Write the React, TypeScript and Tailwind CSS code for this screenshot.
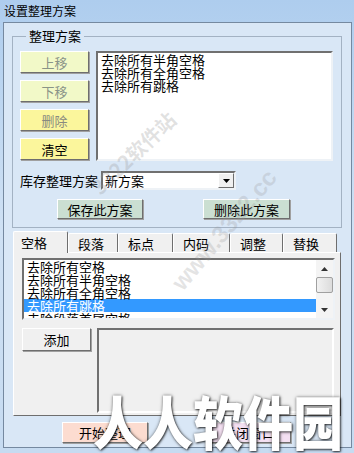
import React from "react";

const raised =
  "border border-t-white border-l-white border-r-[#6e6e6e] border-b-[#6e6e6e] shadow-[1px_1px_0_#a0a0a0]";
const sunken =
  "border-2 border-t-[#707070] border-l-[#707070] border-r-[#eef2f6] border-b-[#eef2f6]";

interface BtnProps {
  children: React.ReactNode;
  className?: string;
}

function Btn({ children, className = "" }: BtnProps): React.JSX.Element {
  return (
    <div className={`flex items-center justify-center text-[13px] leading-none ${raised} ${className}`}>
      {children}
    </div>
  );
}

const tabs = [
  { label: "空格", w: "w-[55px]", active: true },
  { label: "段落", w: "w-[50px]" },
  { label: "标点", w: "w-[55px]" },
  { label: "内码", w: "w-[57px]" },
  { label: "调整", w: "w-[53px]" },
  { label: "替换", w: "w-[54px]" },
];

const spaceItems = [
  "去除所有空格",
  "去除所有半角空格",
  "去除所有全角空格",
  "去除所有跳格",
  "去除段落首尾空格",
];

export default function App(): React.JSX.Element {
  return (
    <div className="relative flex h-[453px] w-[354px] flex-col overflow-hidden bg-gradient-to-b from-[#aecdee] via-[#cfe1f4] to-[#c6dbf1] font-['Noto_Sans_CJK_SC',sans-serif] text-black">
      {/* Title bar */}
      <div className="flex h-[22px] shrink-0 items-center pl-[4px] text-[12px] leading-none">
        设置整理方案
      </div>

      {/* Client area */}
      <div className="ml-[3px] mr-[2px] flex flex-col border border-[#7589a0] bg-[#d9e7f6] pl-[8px] pr-[9px] pb-[4px]">
        {/* Group box */}
        <fieldset className="mt-[6px] border border-[#a3b2c3] px-[7px] pt-[8px] pb-[8px]">
          <legend className="ml-[6px] px-[3px] text-[13px] leading-[14px]">整理方案</legend>

          <div className="flex gap-[7px]">
            <div className="flex w-[69px] flex-col gap-[7px]">
              <Btn className="h-[22px] bg-[#f2f9c8] text-[#8a9488]">上移</Btn>
              <Btn className="h-[22px] bg-[#f2f9c8] text-[#8a9488]">下移</Btn>
              <Btn className="h-[22px] bg-[#fbf69c] text-[#8a8a80]">删除</Btn>
              <Btn className="h-[22px] bg-[#fbf69c]">清空</Btn>
            </div>
            <div className={`h-[110px] w-[237px] bg-white pl-[3px] text-[13px] leading-[13px] ${sunken}`}>
              <div>去除所有半角空格</div>
              <div>去除所有全角空格</div>
              <div>去除所有跳格</div>
            </div>
          </div>

          <div className="mt-[10px] flex items-center">
            <div className="w-[81px] text-[13px] leading-none">库存整理方案</div>
            <div className={`flex h-[19px] w-[135px] items-center bg-white ${sunken}`}>
              <div className="flex-1 pl-[2px] text-[13px] leading-none">新方案</div>
              <div className={`flex h-full w-[16px] items-center justify-center bg-[#f0f0f0] ${raised} shadow-none`}>
                <svg width="7" height="4" viewBox="0 0 7 4">
                  <path d="M0 0h7L3.5 4z" fill="#000" />
                </svg>
              </div>
            </div>
          </div>

          <div className="mt-[9px] flex gap-[60px] pl-[37px]">
            <Btn className="h-[20px] w-[86px] bg-[#cbdfd2]">保存此方案</Btn>
            <Btn className="h-[20px] w-[87px] bg-[#cbdfd2]">删除此方案</Btn>
          </div>
        </fieldset>

        {/* Tab control */}
        <div className="mx-[1px] mt-[3px] flex flex-col">
          <div className="flex h-[21px] items-end">
            {tabs.map((t) =>
              t.active ? (
                <div
                  key={t.label}
                  className={`relative z-10 -mb-px flex h-[22px] items-center pl-[7px] ${t.w} rounded-t-[2px] border-l border-t border-r border-l-white border-t-white border-r-[#6e6e6e] bg-[#f0f0f0] text-[13px] leading-none`}
                >
                  {t.label}
                </div>
              ) : (
                <div
                  key={t.label}
                  className={`flex h-[19px] items-center pl-[9px] ${t.w} rounded-t-[2px] border-l border-t border-r border-l-white border-t-white border-r-[#6e6e6e] bg-[#f0f0f0] text-[13px] leading-none`}
                >
                  {t.label}
                </div>
              )
            )}
          </div>
          <div className="flex h-[164px] flex-col border border-t-white border-l-white border-r-[#6e6e6e] border-b-[#6e6e6e] bg-[#f0f0f0] pl-[8px] pr-[5px] pt-[5px]">
            <div className={`flex h-[62px] bg-white ${sunken}`}>
              <div className="flex-1 overflow-hidden text-[13px] leading-[13px]">
                {spaceItems.map((s) =>
                  s === "去除所有跳格" ? (
                    <div key={s} className="bg-[#3399ff] pl-[3px] text-white">
                      {s}
                    </div>
                  ) : (
                    <div key={s} className="pl-[3px]">
                      {s}
                    </div>
                  )
                )}
              </div>
              <div className="flex w-[17px] flex-col bg-[#f4f4f4]">
                <div className="flex h-[17px] items-center justify-center">
                  <svg width="7" height="4" viewBox="0 0 7 4">
                    <path d="M0 4h7L3.5 0z" fill="#333" />
                  </svg>
                </div>
                <div className="h-[16px] rounded-[2px] border border-[#a0a0a0] bg-gradient-to-r from-[#f2f2f2] to-[#dcdcdc]" />
                <div className="flex-1" />
                <div className="flex h-[17px] items-center justify-center">
                  <svg width="7" height="4" viewBox="0 0 7 4">
                    <path d="M0 0h7L3.5 4z" fill="#333" />
                  </svg>
                </div>
              </div>
            </div>
            <div className="mt-[8px] flex gap-[6px]">
              <Btn className="h-[23px] w-[69px] self-start bg-[#f0f0f0]">添加</Btn>
              <div className={`h-[85px] w-[237px] bg-[#f0f0f0] ${sunken} border-r-white border-b-white`} />
            </div>
          </div>
        </div>

        {/* Bottom buttons */}
        <div className="mt-[6px] flex gap-[59px] pl-[50px]">
          <Btn className="h-[21px] w-[86px] bg-[#fcdcd0]">开始整理</Btn>
          <Btn className="h-[21px] w-[84px] bg-[#f4e0f2]">关闭窗口</Btn>
        </div>
      </div>

      {/* Watermarks */}
      <div className="pointer-events-none absolute left-[80px] top-[143px] -rotate-[44deg] text-[20px] font-bold leading-none text-[rgba(150,150,150,0.28)]">
        3322软件站
      </div>
      <div className="pointer-events-none absolute left-[150px] top-[218px] -rotate-[50deg] font-['Liberation_Sans',sans-serif] text-[24px] font-bold leading-none text-[rgba(150,150,150,0.25)]">
        www.3322.cc
      </div>
      <div className="pointer-events-none absolute left-[93px] top-[391px] origin-top scale-y-[1.15] text-[50px] font-black leading-none text-white [text-shadow:1px_1px_2px_rgba(0,0,0,0.7),0_0_3px_rgba(0,0,0,0.5)]">
        人人软件园
      </div>
    </div>
  );
}
